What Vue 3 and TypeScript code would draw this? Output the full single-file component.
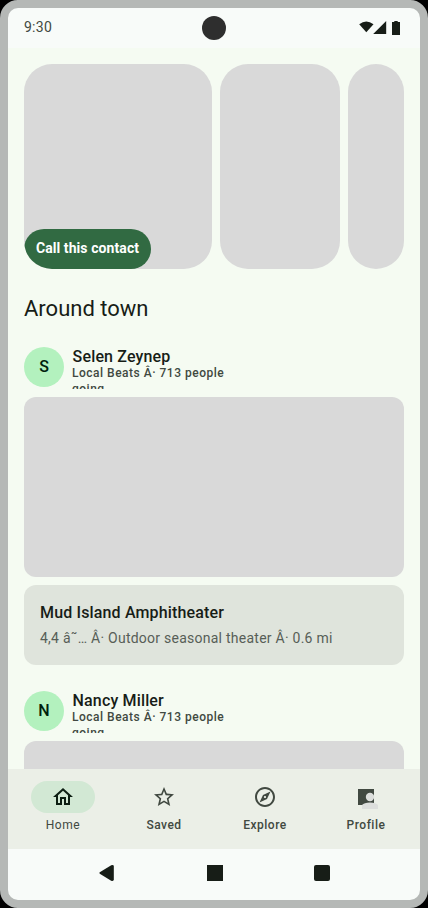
<script setup lang="ts">
interface Post {
  initial: string
  name: string
  meta: string
  place?: string
  details?: string
}

const posts: Post[] = [
  {
    initial: 'S',
    name: 'Selen Zeynep',
    meta: 'Local Beats Â· 713 people going',
    place: 'Mud Island Amphitheater',
    details: '4,4 â˜… Â· Outdoor seasonal theater Â· 0.6 mi',
  },
  { initial: 'N', name: 'Nancy Miller', meta: 'Local Beats Â· 713 people going' },
]

const tabs: string[] = ['Home', 'Saved', 'Explore', 'Profile']
</script>

<template>
  <div class="device">
    <header class="status">
      <span class="time">9:30</span>
      <span class="camera"></span>
      <svg class="signals" width="42" height="16" viewBox="0 0 42 16">
        <path d="M0.2 4.3Q7.3-1.2 14.5 4.3L7.3 12.2Z" />
        <path d="M14.2 14L27.2 1V14Z" />
        <path d="M33 2H35.3V1H38.7V2H41V15H33Z" />
      </svg>
    </header>

    <main class="content">
      <section class="carousel">
        <div class="slide large"><button class="call">Call this contact</button></div>
        <div class="slide medium"></div>
        <div class="slide small"></div>
      </section>

      <h1>Around town</h1>

      <article v-for="post in posts" :key="post.name" class="post">
        <div class="author">
          <span class="avatar">{{ post.initial }}</span>
          <div class="byline">
            <div class="name">{{ post.name }}</div>
            <div class="meta">{{ post.meta }}</div>
          </div>
        </div>
        <div class="photo"></div>
        <div v-if="post.place" class="place">
          <div class="title">{{ post.place }}</div>
          <div class="details">{{ post.details }}</div>
        </div>
      </article>
    </main>

    <nav class="tabs">
      <a v-for="(tab, i) in tabs" :key="tab" class="tab" :class="{ active: i === 0 }">
        <span class="indicator">
          <svg width="24" height="24" viewBox="0 0 24 24">
            <path v-if="tab === 'Home'" d="M12 5.69l5 4.5V18h-2v-6H9v6H7v-7.81l5-4.5M12 3L2 12h3v8h6v-6h2v6h6v-8h3L12 3z" />
            <path v-else-if="tab === 'Saved'" d="M22 9.24l-7.19-.62L12 2 9.19 8.63 2 9.24l5.46 4.73L5.82 21 12 17.27 18.18 21l-1.63-7.03L22 9.24zM12 15.4l-3.76 2.27 1-4.28-3.32-2.88 4.38-.38L12 6.1l1.71 4.04 4.38.38-3.32 2.88 1 4.28L12 15.4z" />
            <path v-else-if="tab === 'Explore'" d="M12 2C6.48 2 2 6.48 2 12s4.48 10 10 10 10-4.48 10-10S17.52 2 12 2zm0 18c-4.41 0-8-3.59-8-8s3.59-8 8-8 8 3.59 8 8-3.59 8-8 8zm-5.5-2.5l7.51-3.49L17.5 6.5 9.99 9.99 6.5 17.5zm5.5-6.6c.61 0 1.1.49 1.1 1.1s-.49 1.1-1.1 1.1-1.1-.49-1.1-1.1.49-1.1 1.1-1.1z" />
            <g v-else>
              <rect x="4" y="4" width="16" height="16" />
              <circle class="light" cx="16" cy="12" r="4.2" />
              <path class="light" d="M8 24V20Q10 17.5 16 17.5Q22 17.5 24 20V24Z" />
            </g>
          </svg>
        </span>
        <span class="label">{{ tab }}</span>
      </a>
    </nav>

    <footer class="system">
      <svg width="16" height="16" viewBox="0 0 16 16"><path d="M0.8 7.3L12.2 0.3Q14.8-0.6 14.8 1.5V14.5Q14.8 16.5 12.2 15.7L0.8 8.7Q0 8 0.8 7.3Z" /></svg>
      <svg width="16" height="16" viewBox="0 0 16 16"><path d="M0 0H16V16H0Z" /></svg>
      <svg width="16" height="16" viewBox="0 0 16 16"><rect width="16" height="16" rx="2" /></svg>
    </footer>
  </div>
</template>

<style>
body {
  background: #000;
}
</style>

<style scoped>
.device {
  box-sizing: border-box;
  width: 428px;
  height: 908px;
  border: 8px solid #b5b8b6;
  border-radius: 18px;
  overflow: hidden;
  display: flex;
  flex-direction: column;
  background: #f8fbf9;
  color: #171d17;
  font-family: Roboto, sans-serif;
}
.status {
  flex: none;
  height: 40px;
  padding: 0 19px 0 16px;
  display: grid;
  grid-template-columns: 178px 24px 1fr;
  align-items: center;
}
.time {
  padding-bottom: 2px;
  font-size: 14px;
  line-height: 20px;
  letter-spacing: 0.25px;
  color: #414941;
}
.camera {
  width: 24px;
  height: 24px;
  border-radius: 50%;
  background: #2e2e2e;
}
.signals {
  justify-self: end;
  fill: #171d17;
}
.content {
  flex: none;
  box-sizing: border-box;
  height: 721px;
  padding: 16px 16px 0;
  overflow: hidden;
  background: #f5fbf2;
}
.carousel {
  display: flex;
  gap: 8px;
  height: 205px;
}
.slide {
  display: flex;
  align-items: flex-end;
  border-radius: 28px;
  overflow: hidden;
  background: #d9d9d9;
}
.large {
  width: 188px;
}
.medium {
  width: 120px;
}
.small {
  width: 56px;
}
.call {
  width: 127px;
  height: 40px;
  padding: 0 0 2px;
  border: 0;
  border-radius: 20px;
  background: #316a42;
  color: #fff;
  font: 700 14px/20px Roboto, sans-serif;
  letter-spacing: 0.08px;
  white-space: nowrap;
}
h1 {
  margin: 26px 0 24px;
  font-size: 22px;
  font-weight: 400;
  line-height: 28px;
}
.post {
  margin-bottom: 26px;
}
.author {
  display: flex;
  gap: 8px;
  height: 40px;
  margin-bottom: 10px;
}
.avatar {
  flex: none;
  width: 40px;
  height: 40px;
  border-radius: 50%;
  background: #b3f1be;
  color: #00210c;
  font-size: 16px;
  font-weight: 500;
  line-height: 40px;
  text-align: center;
}
.byline {
  width: 170px;
  height: 42px;
  overflow: hidden;
}
.name {
  height: 18px;
  padding-left: 0.6px;
  font-size: 16px;
  font-weight: 500;
  line-height: 20px;
  letter-spacing: 0.15px;
}
.meta {
  font-size: 12px;
  font-weight: 500;
  line-height: 16px;
  letter-spacing: 0.5px;
  color: #414941;
}
.photo {
  height: 180px;
  border-radius: 12px;
  background: #d9d9d9;
}
.place {
  box-sizing: border-box;
  height: 80px;
  margin-top: 8px;
  padding: 16px;
  border-radius: 12px;
  background: #dfe4dc;
}
.title {
  font-size: 16px;
  font-weight: 500;
  line-height: 24px;
  letter-spacing: 0.15px;
}
.details {
  margin-top: 3px;
  font-size: 14px;
  line-height: 20px;
  letter-spacing: 0.25px;
  color: #575e57;
}
.tabs {
  flex: none;
  box-sizing: border-box;
  height: 80px;
  padding: 12px 4px 0;
  display: grid;
  grid-template-columns: repeat(4, 1fr);
  background: #ebefe7;
}
.tab {
  display: flex;
  flex-direction: column;
  align-items: center;
  gap: 4px;
  color: #414941;
}
.indicator {
  display: grid;
  place-items: center;
  width: 64px;
  height: 32px;
  border-radius: 16px;
}
.indicator svg {
  fill: currentColor;
}
.active .indicator {
  background: #d2e8d4;
  color: #0d1f13;
}
.light {
  fill: #dcdedc;
}
.label {
  padding-left: 1px;
  font-size: 12px;
  font-weight: 500;
  line-height: 16px;
  letter-spacing: 0.5px;
}
.active .label {
  font-weight: 400;
  letter-spacing: 0.6px;
}
.system {
  flex: 1;
  padding: 0 90px 3px 91px;
  display: flex;
  align-items: center;
  justify-content: space-between;
}
.system svg {
  fill: #171d17;
}
</style>
